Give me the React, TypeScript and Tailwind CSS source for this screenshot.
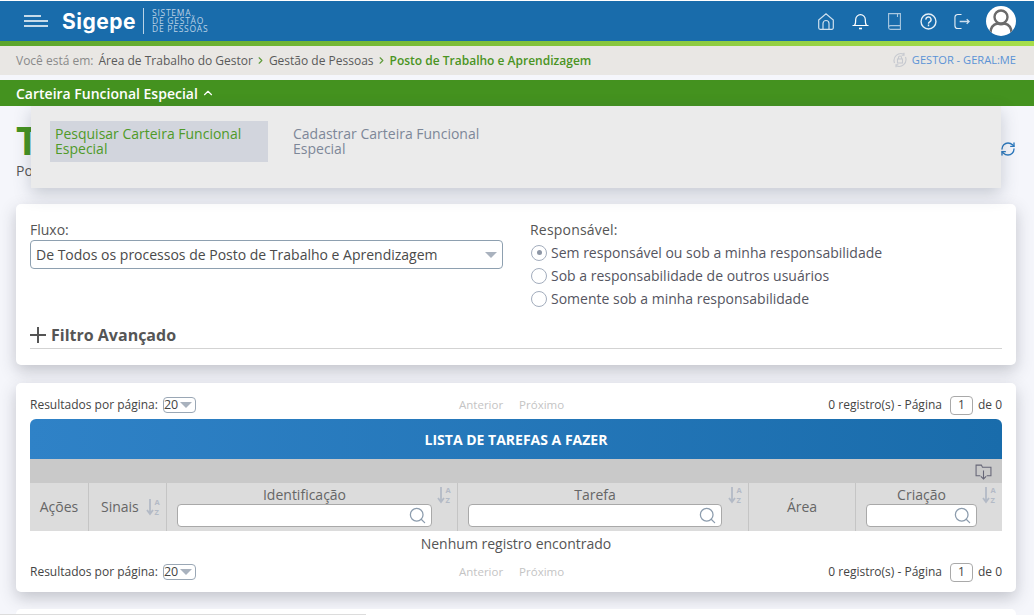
import { ChevronRight, ChevronUp, RefreshCw, Search } from 'lucide-react';

const FONT = "font-['Open_Sans','Noto_Sans',sans-serif]";

function SortIcon() {
    return (
        <svg width="16" height="18" viewBox="0 0 16 18" className="text-[#b3bac6]" fill="none">
            <path d="M4 1v14M1 12l3 4 3-4" stroke="currentColor" strokeWidth="1.8" />
            <text x="8.5" y="7" fontSize="7.5" fontWeight="700" fill="currentColor" fontFamily="Open Sans">A</text>
            <text x="8.5" y="17" fontSize="7.5" fontWeight="700" fill="currentColor" fontFamily="Open Sans">Z</text>
        </svg>
    );
}

function SearchBox({ width }: { width: string }) {
    return (
        <div className={`flex h-[23px] items-center justify-end rounded border border-[#a9a9a9] bg-white pr-[4px] ${width}`}>
            <Search size={19} strokeWidth={1.6} className="text-[#8c9cad]" />
        </div>
    );
}

function Radio({ checked, label }: { checked?: boolean; label: string }) {
    return (
        <div className="flex h-[23px] items-center gap-[4px] pl-px">
            <span className="flex h-[16px] w-[16px] items-center justify-center rounded-full border border-[#a3adbd] bg-white">
                {checked && <span className="h-[5px] w-[5px] rounded-full bg-[#8e97a6]" />}
            </span>
            <span className="text-[14px] text-[#55555f]">{label}</span>
        </div>
    );
}

function Pager() {
    return (
        <div className="flex h-[20px] items-center text-[12px] text-[#444]">
            <div className="flex w-[400px] items-center">
                <span>Resultados por página:</span>
                <span className="ml-[5px] flex h-[16px] w-[33px] items-center justify-between rounded border border-[#9aa7b5] pr-[3px] text-[12.5px]">
                    20
                    <span className="h-0 w-0 border-x-[6px] border-t-[6px] border-x-transparent border-t-[#a9b2be]" />
                </span>
            </div>
            <div className="flex gap-[16px] pl-[29px] text-[11.5px] text-[#c4c4c4]">
                <span>Anterior</span>
                <span>Próximo</span>
            </div>
            <div className="ml-auto flex items-center">
                <span>0 registro(s) - Página</span>
                <span className="ml-[8px] flex h-[19px] w-[23px] items-center justify-center rounded border border-[#a9a9a9]">1</span>
                <span className="ml-[5px]">de 0</span>
            </div>
        </div>
    );
}

export default function App() {
    return (
        <div className={`${FONT} relative h-[615px] w-[1034px] overflow-hidden bg-[#f5f6fb]`}>
            {/* top bar */}
            <div className="h-px bg-white" />
            <header className="flex h-[40px] items-center bg-[#196cab] pl-[24px] pr-[18px] text-white">
                <svg width="24" height="12" viewBox="0 0 24 12" fill="none" stroke="#fff" strokeWidth="1.3">
                    <path d="M0 1h17M0 6h24M0 11h24" />
                </svg>
                <span className="ml-[14px] font-['Inter',sans-serif] text-[21px] font-bold leading-none tracking-[0.5px]">Sigepe</span>
                <span className="ml-[7px] h-[26px] w-px bg-white/70" />
                <span className="ml-[8px] w-[66px] text-[8.5px] leading-[8px] tracking-[0.75px] text-[#bcd2e6]">
                    SISTEMA
                    <br />
                    DE GESTÃO
                    <br />
                    DE PESSOAS
                </span>
                <div className="ml-auto flex items-center">
                    <svg width="16" height="17" viewBox="0 0 16 17" fill="none" stroke="#cfe0ee" strokeWidth="1.2">
                        <path d="M.7 7 8 .9 15.300 7v7.800a1.500 1.500 0 0 1-1.500 1.500H2.200A1.500 1.500 0 0 1 .7 14.800zM5 16.300V10.500a3 3 0 0 1 6 0v5.800" />
                    </svg>
                    <svg className="ml-[18px]" width="17" height="18" viewBox="0 0 17 18" fill="none" stroke="#fff" strokeWidth="1.2">
                        <path d="M.5 13.500h16M2.500 13.500c1-1.200 1.200-2.500 1.200-6a4.800 4.800 0 0 1 9.600 0c0 3.500.2 4.800 1.200 6" />
                        <path d="M7 16.500h3" strokeWidth="1.600" />
                    </svg>
                    <svg className="ml-[19px]" width="13" height="17" viewBox="0 0 13 17" fill="none" stroke="#a9c8e0" strokeWidth="1.1">
                        <path d="M.6 14.500V.6h11.800v15.800H2.500a1.900 1.900 0 0 1-1.900-1.900 1.900 1.900 0 0 1 1.900-1.900h9.900M9.500.6v3.500" />
                    </svg>
                    <svg className="ml-[19px]" width="17" height="17" viewBox="0 0 18 18" fill="none" stroke="#e6eff6" strokeWidth="1.5">
                        <circle cx="9" cy="9" r="7.900" />
                        <path d="M6.300 7a2.700 2.700 0 1 1 4 2.300c-.9.500-1.300 1-1.300 2M9 12.300v1.700" />
                    </svg>
                    <svg className="ml-[17px]" width="16" height="17" viewBox="0 0 17 18" fill="none" stroke="#e6eff6" strokeWidth="1.2">
                        <path d="M8 1.500H4a3 3 0 0 0-3 3v9a3 3 0 0 0 3 3h4" />
                        <path d="M6 9h10M13.500 6.500 16 9l-2.500 2.500" stroke="#cfe0ee" strokeWidth="1.400" />
                    </svg>
                    <span className="ml-[16px] flex h-[30px] w-[30px] items-center justify-center overflow-hidden rounded-full bg-white">
                        <svg width="30" height="30" viewBox="0 0 30 30" fill="none" stroke="#6b6b6b" strokeWidth="2.400">
                            <circle cx="15" cy="11" r="6.500" />
                            <path d="M4.500 27c0-5 2.500-8.500 7-9.500M25.500 27c0-5-2.500-8.500-7-9.500M11.500 17.500c2 1 5 1 7 0" />
                        </svg>
                    </span>
                </div>
            </header>
            <div className="h-[5px] bg-gradient-to-r from-[#5ca52c] to-[#a6de4a]" />

            {/* breadcrumb */}
            <div className="flex h-[29px] items-center bg-[#e9e7e4] pl-[16px] pr-[18px] text-[12px]">
                <span className="text-[#8a8a8a]">Você está em:</span>
                <span className="ml-[5px] text-[#5a5a5a]">Área de Trabalho do Gestor</span>
                <ChevronRight size={11} strokeWidth={2.5} className="mx-[2.5px] text-[#5f9a3a]" />
                <span className="text-[#5a5a5a]">Gestão de Pessoas</span>
                <ChevronRight size={11} strokeWidth={2.5} className="mx-[2.5px] text-[#5f9a3a]" />
                <span className="font-semibold text-[#4a9423]">Posto de Trabalho e Aprendizagem</span>
                <span className="ml-auto flex items-center gap-[4px] text-[11.1px] text-[#5b93d6]">
                    <svg width="16" height="16" viewBox="0 0 16 16" fill="none" stroke="#c6c9cf" strokeWidth="1.100">
                        <path d="M2.500 11A7 7 0 0 1 12 2.200M13.500 5A7 7 0 0 1 4 13.800M12 .8v2.400H9.600M4 15.200v-2.400h2.400" />
                        <rect x="5.500" y="7" width="5" height="4" />
                        <path d="M6.500 7V5.500a1.500 1.500 0 0 1 3 0V7" />
                    </svg>
                    GESTOR - GERAL:ME
                </span>
            </div>
            <div className="h-[5px]" />

            {/* green nav */}
            <nav className="flex h-[26px] items-center gap-[3px] bg-[#44921f] pl-[16px] text-[14px] font-semibold text-white">
                Carteira Funcional Especial
                <ChevronUp size={14} />
            </nav>

            {/* page title behind the menu */}
            <div className="relative h-[98px] pl-[16px] pt-[14px]">
                <div className="text-[39px] font-bold leading-[40px] text-[#44921f]">T</div>
                <div className="mt-[2px] text-[14px] leading-[18px] text-[#555]">Po</div>
                <RefreshCw size={16} className="absolute right-[18px] top-[35px] text-[#2b78bd]" />
            </div>

            {/* filter card */}
            <section className="ml-[16px] h-[161px] w-[1000px] rounded-[5px] bg-white px-[14px] pt-[16px] shadow-[0_6px_16px_rgba(50,55,70,0.26)]">
                <div className="flex">
                    <div className="w-[500px]">
                        <div className="text-[14px] font-medium leading-[19px] text-[#555]">Fluxo:</div>
                        <div className="mt-px flex h-[29px] w-[473px] items-center justify-between rounded border border-[#8ea0b0] pl-[5px] pr-[5px] text-[14px] text-[#4a4a4a]">
                            De Todos os processos de Posto de Trabalho e Aprendizagem
                            <span className="h-0 w-0 border-x-[6px] border-t-[6px] border-x-transparent border-t-[#a9b2be]" />
                        </div>
                    </div>
                    <div>
                        <div className="text-[14px] font-medium leading-[19px] tracking-[0.2px] text-[#555]">Responsável:</div>
                        <div className="mt-[2px]">
                            <Radio checked label="Sem responsável ou sob a minha responsabilidade" />
                            <Radio label="Sob a responsabilidade de outros usuários" />
                            <Radio label="Somente sob a minha responsabilidade" />
                        </div>
                    </div>
                </div>
                <div className="mt-[11px] flex h-[28px] items-center gap-[5px] border-b border-[#d3d3d3] text-[16px] font-bold text-[#555]">
                    <svg width="16" height="16" viewBox="0 0 16 16" stroke="#555" strokeWidth="2">
                        <path d="M0 8h16M8 0v16" />
                    </svg>
                    Filtro Avançado
                </div>
            </section>

            {/* task list card */}
            <section className="ml-[16px] mt-[18px] h-[209px] w-[1000px] rounded-[5px] bg-white px-[14px] pt-[12px] shadow-[0_6px_16px_rgba(50,55,70,0.26)]">
                <Pager />
                <div className="mt-[4px] flex h-[40px] items-center justify-center rounded-t-[6px] bg-gradient-to-r from-[#2f82c7] to-[#196cab] text-[14px] font-bold text-white">
                    LISTA DE TAREFAS A FAZER
                </div>
                <div className="flex h-[24px] items-center justify-end bg-[#c9c9c9] pr-[10px]">
                    <svg width="17" height="17" viewBox="0 0 16 16" fill="none" stroke="#667" strokeWidth="1">
                        <path d="M5 12H1V2h5l1 2h8v8h-4M8 7v8M5.500 12.500 8 15l2.500-2.500" />
                    </svg>
                </div>
                <div className="flex h-[48px] bg-[#dcdcdc] text-[14px] text-[#666]">
                    <div className="flex w-[59px] items-center justify-center border-r border-[#c5c5c5] pb-px">Ações</div>
                    <div className="flex w-[78px] items-center gap-[7px] border-r border-[#c5c5c5] pb-px pl-[12px]">
                        Sinais
                        <SortIcon />
                    </div>
                    <div className="relative w-[291px] border-r border-[#c5c5c5] pl-[10px] pt-[3px]">
                        <div className="w-[255px] text-center leading-[18px]">Identificação</div>
                        <SearchBox width="w-[255px]" />
                        <span className="absolute right-[4px] top-[3px]"><SortIcon /></span>
                    </div>
                    <div className="relative w-[291px] border-r border-[#c5c5c5] pl-[10px] pt-[3px]">
                        <div className="w-[254px] text-center leading-[18px]">Tarefa</div>
                        <SearchBox width="w-[254px]" />
                        <span className="absolute right-[4px] top-[3px]"><SortIcon /></span>
                    </div>
                    <div className="flex w-[107px] items-center justify-center border-r border-[#c5c5c5] pb-px">Área</div>
                    <div className="relative flex-1 pl-[10px] pt-[3px]">
                        <div className="w-[111px] text-center leading-[18px]">Criação</div>
                        <SearchBox width="w-[111px]" />
                        <span className="absolute right-[4px] top-[3px]"><SortIcon /></span>
                    </div>
                </div>
                <div className="flex h-[25px] items-center justify-center text-[14px] text-[#555]">Nenhum registro encontrado</div>
                <div className="mt-[6px]">
                    <Pager />
                </div>
            </section>

            {/* next card, cut off by the window */}
            <section className="ml-[16px] mt-[17px] h-[40px] w-[1000px] rounded-[5px] bg-white" />

            {/* thin scrollbar line on the bottom edge */}
            <div className="absolute left-0 top-[614px] h-px w-[366px] bg-[#dcdcdc]" />

            {/* open dropdown menu */}
            <div className="absolute left-[31px] top-[106px] flex h-[82px] w-[970px] items-start gap-[15px] bg-[#ebebeb] pl-[19px] pt-[15px] text-[14px] leading-[15px] shadow-[0_6px_16px_rgba(60,70,90,0.25)]">
                <div className="h-[41px] w-[218px] bg-[#d2d5dd] px-[5px] pt-[5px] text-[#4f9a28]">Pesquisar Carteira Funcional Especial</div>
                <div className="w-[218px] px-[10px] pt-[5px] text-[#7d8798]">Cadastrar Carteira Funcional Especial</div>
            </div>
        </div>
    );
}
